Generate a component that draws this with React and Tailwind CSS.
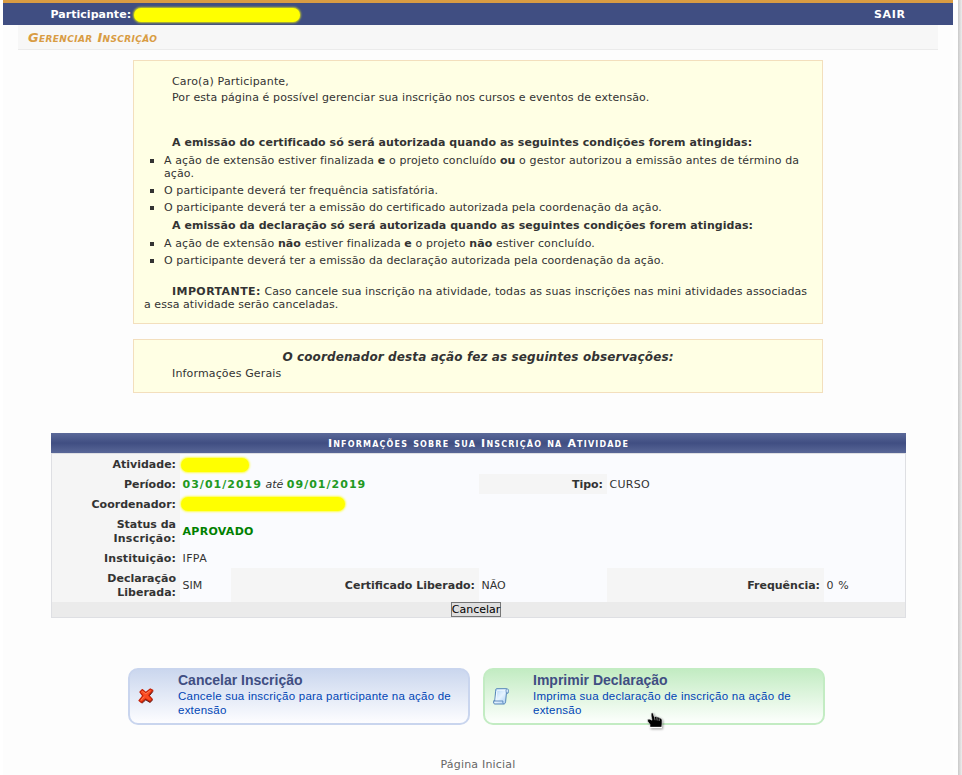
const RedX = () => (
  <svg width="16" height="16" viewBox="0 0 16 16" className="block">
    <path d="M2 4 4.2 1.6 7.8 4.4 12.3 1 14.8 2.4 10.8 7.4 14.2 11.2 12 13.6 7.6 11 3.4 14.6 1 12.6 4.8 7.8Z" fill="#fb4b21" stroke="#c52208" strokeWidth="1.3" strokeLinejoin="round" />
    <path d="M3.4 4.2 4.5 3.4 7.8 5.8 12.2 2.6M3 12.2 6 8.6" fill="none" stroke="#ff7a50" strokeWidth="1" />
    <path d="M15 3.4 11.5 7.6M14.8 11.8 12 14.5 7.8 11.9 4 15.2" fill="none" stroke="#5a0c05" strokeWidth=".9" />
  </svg>
);

const Scroll = () => (
  <svg width="16" height="17" viewBox="0 0 16 17" className="block">
    <defs>
      <linearGradient id="paper" x1="0" y1="0" x2="1" y2="1">
        <stop offset="0" stopColor="#a9d0f6" />
        <stop offset=".5" stopColor="#e6f3ff" />
        <stop offset="1" stopColor="#9cc6f0" />
      </linearGradient>
    </defs>
    <path d="M3.6.7H13.8C15 .7 15.6 2 15.4 3.4L15 5.2H13.4L12.6 13.8C12.4 15.3 11.8 16 10.6 16H1.8C.6 16 .4 14.5.8 12.6H1.8L2.6 3.2C2.6 1.8 2.8.7 3.6.7Z" fill="url(#paper)" stroke="#5585b8" strokeWidth="1" strokeLinejoin="round" />
    <path d="M13.8 1C12.8 1.4 13 3 13.4 5.2M1 13H10C9.6 14.2 9.8 15.6 10.6 15.8" fill="none" stroke="#5585b8" strokeWidth=".9" />
    <path d="M4 2.2H12M3.8 3.2 3 12" fill="none" stroke="#f2f9ff" strokeWidth="1" />
  </svg>
);

const HandCursor = () => (
  <svg width="17" height="17" viewBox="0 0 17 17" className="absolute left-[647px] top-[712px] drop-shadow-[1px_1px_1px_rgba(0,0,0,0.4)]">
    <path d="M4.2 1.5Q5 .2 6.1 1.2L7 4.4 9 4.6 11.5 5.3 13.5 6.2 15 7.6V12L14.6 15.2H3V12.6L.6 9.2V7.2H2.8L5 8.2 4.2 4Z" fill="#000" stroke="#fff" strokeWidth=".5" strokeLinejoin="round" />
    <path d="M7.3 4.6 8 8.2M9.8 5.3 10.2 8.5M12.2 6.3V9" stroke="#fff" strokeWidth=".5" />
    <path d="M2.6 15.6H15" stroke="#fff" strokeWidth="1.2" />
  </svg>
);

const Mark = ({ className }) => (
  <span className={`block rounded-full bg-[#ffff00] shadow-[0_0_2px_1px_#ffff00b0] ${className}`} />
);

const Item = ({ children, className = "" }) => (
  <li className={`flex ${className}`}>
    <span className="mr-[10px] mt-[5px] block h-1 w-1 shrink-0 bg-[#333]" />
    <span>{children}</span>
  </li>
);

const Label = ({ children, className = "" }) => (
  <div className={`flex shrink-0 items-center justify-end bg-[#f5f5f5] pr-1 pt-px text-right font-bold ${className}`}>{children}</div>
);

const Value = ({ children, className = "" }) => (
  <div className={`flex items-center pl-[2.5px] pt-px ${className}`}>{children}</div>
);

const Action = ({ icon, title, text, className }) => (
  <a className={`flex h-[57px] w-[342px] rounded-[10px] border-2 font-['Liberation_Sans',sans-serif] ${className}`}>
    <span className="ml-2 mt-[18px] w-10 shrink-0">{icon}</span>
    <span className="block pt-[2px]">
      <span className="block text-[14px] font-bold leading-4 text-[#404e82]">{title}</span>
      <span className="mt-px block w-[284px] whitespace-nowrap text-[11.5px] leading-[14px] tracking-[0.23px] text-[#0044b5]">{text}</span>
    </span>
  </a>
);

export default function App() {
  return (
    <div className="relative flex h-[775px] w-[962px] overflow-hidden bg-white font-['DejaVu_Sans',sans-serif] text-[11px] leading-[13px] text-[#333]">
      <div className="ml-[3px] w-[950px] shrink-0 bg-[#fdfdfd]">
        <header className="flex h-[25px] items-center border-t-[3px] border-[#d99c43] bg-[#404e82] pl-[47.5px] pr-[47.5px] font-bold text-white">
          <span className="tracking-[0.03px]">Participante:</span>
          <Mark className="ml-[3px] mt-[2px] h-[14px] w-[166px]" />
          <span className="ml-auto tracking-[0.6px]">SAIR</span>
        </header>
        <h2 className="ml-[15px] mr-[15px] h-[25px] border-b border-[#ebebeb] bg-[#f7f7f7] pl-[10px] pt-[5px] text-[13px] font-bold italic leading-4 tracking-[0.36px] text-[#d99c43] [font-variant:small-caps]">Gerenciar Inscrição</h2>

        <section className="ml-[130px] mt-[10px] h-[264px] w-[690px] whitespace-nowrap border border-[#f3dfbd] bg-[#ffffe4] px-[10px] pt-[14px]">
          <p className="pl-7 tracking-[0.17px]">Caro(a) Participante,</p>
          <p className="mt-[3px] pl-7 tracking-[0.1px]">Por esta página é possível gerenciar sua inscrição nos cursos e eventos de extensão.</p>
          <p className="mt-8 pl-7 font-bold tracking-[0.048px]">A emissão do certificado só será autorizada quando as seguintes condições forem atingidas:</p>
          <ul className="mt-[5px] flex flex-col gap-1 pl-[6px]">
            <Item className="tracking-[0.112px]">A ação de extensão estiver finalizada <b>e</b> o projeto concluído <b>ou</b> o gestor autorizou a emissão antes de término da<br />ação.</Item>
            <Item className="tracking-[0.08px]">O participante deverá ter frequência satisfatória.</Item>
            <Item className="tracking-[0.075px]">O participante deverá ter a emissão do certificado autorizada pela coordenação da ação.</Item>
          </ul>
          <p className="mt-[5px] pl-7 font-bold tracking-[0.048px]">A emissão da declaração só será autorizada quando as seguintes condições forem atingidas:</p>
          <ul className="mt-[5px] flex flex-col gap-1 pl-[6px]">
            <Item className="tracking-[0.107px]">A ação de extensão <b>não</b> estiver finalizada <b>e</b> o projeto <b>não</b> estiver concluído.</Item>
            <Item className="tracking-[0.075px]">O participante deverá ter a emissão da declaração autorizada pela coordenação da ação.</Item>
          </ul>
          <p className="mt-[18px] indent-7 tracking-[0.085px]"><b className="tracking-[0.42px]">IMPORTANTE:</b> Caso cancele sua inscrição na atividade, todas as suas inscrições nas mini atividades associadas<br /><span className="tracking-[0.05px]">a essa atividade serão canceladas.</span></p>
        </section>

        <section className="ml-[130px] mt-[15px] h-[54px] w-[690px] border border-[#f3dfbd] bg-[#ffffe4] px-[10px] pt-[10px]">
          <h3 className="text-center text-[12px] font-bold italic leading-[14px] tracking-[0.105px]">O coordenador desta ação fez as seguintes observações:</h3>
          <p className="mt-[3px] pl-7 tracking-[0.15px]">Informações Gerais</p>
        </section>

        <section className="ml-12 mt-10 w-[855px]">
          <h3 className="h-5 bg-linear-to-b from-[#5b6999] via-[#404e82] to-[#596797] pt-px text-center font-bold leading-5 tracking-[1.18px] text-white [font-variant:small-caps]">Informações sobre sua Inscrição na Atividade</h3>
          <div className="border border-[#dedfe3] bg-[#fafbfe] leading-[14px]">
            <div className="flex h-5"><Label className="w-32">Atividade:</Label><Mark className="ml-[1px] mt-1 h-[14px] w-[68px]" /></div>
            <div className="flex h-5">
              <Label className="w-32">Período:</Label>
              <Value className="w-[299px]">
                <span><b className="tracking-[1.02px] text-[#229922]">03/01/2019</b> <i>até</i> <b className="tracking-[1.02px] text-[#229922]">09/01/2019</b></span>
              </Value>
              <Label className="w-32">Tipo:</Label><Value className="tracking-[0.3px]">CURSO</Value>
            </div>
            <div className="flex h-5"><Label className="w-32">Coordenador:</Label><Mark className="ml-[1px] mt-[3px] h-[14px] w-[164px]" /></div>
            <div className="flex h-[34px]"><Label className="w-32"><span>Status da<br /><span className="tracking-[0.25px]">Inscrição:</span></span></Label><Value className="font-bold tracking-[0.3px] text-[#008000]">APROVADO</Value></div>
            <div className="flex h-5"><Label className="w-32 tracking-[0.15px]">Instituição:</Label><Value className="tracking-[0.4px]">IFPA</Value></div>
            <div className="flex h-[34px]">
              <Label className="w-32">Declaração<br />Liberada:</Label><Value className="w-[51px]">SIM</Value>
              <Label className="w-[248px]">Certificado Liberado:</Label><Value className="w-32">NÃO</Value>
              <Label className="w-[217px]">Frequência:</Label><Value className="tracking-[0.6px]">0 %</Value>
            </div>
            <div className="flex h-[15px] bg-[#ebebeb]">
              <button className="ml-[399px] flex h-[15px] w-[50px] items-center justify-center border border-[#777] bg-[#dedede] text-[11px] leading-[13px] text-black">Cancelar</button>
            </div>
          </div>
        </section>

        <nav className="ml-[125px] mt-[50px] flex gap-[13px]">
          <Action icon={<RedX />} title="Cancelar Inscrição" text={<>Cancele sua inscrição para participante na ação de<br />extensão</>} className="border-[#c9d5ee] bg-linear-to-b from-[#cbd7ee] to-[#fdfdff]" />
          <Action icon={<Scroll />} title="Imprimir Declaração" text={<>Imprima sua declaração de inscrição na ação de<br />extensão</>} className="border-[#c3ecc3] bg-linear-to-b from-[#c3ecc3] to-[#fdfffd]" />
        </nav>
        <footer className="mt-[33px] text-center tracking-[0.2px] text-[#666]">Página Inicial</footer>
      </div>
      <div className="w-[5px] bg-[#fefefe]" />
      <div className="w-1 bg-linear-to-r from-[#c9c9c9] to-[#ededed]" />
      <HandCursor />
    </div>
  );
}
